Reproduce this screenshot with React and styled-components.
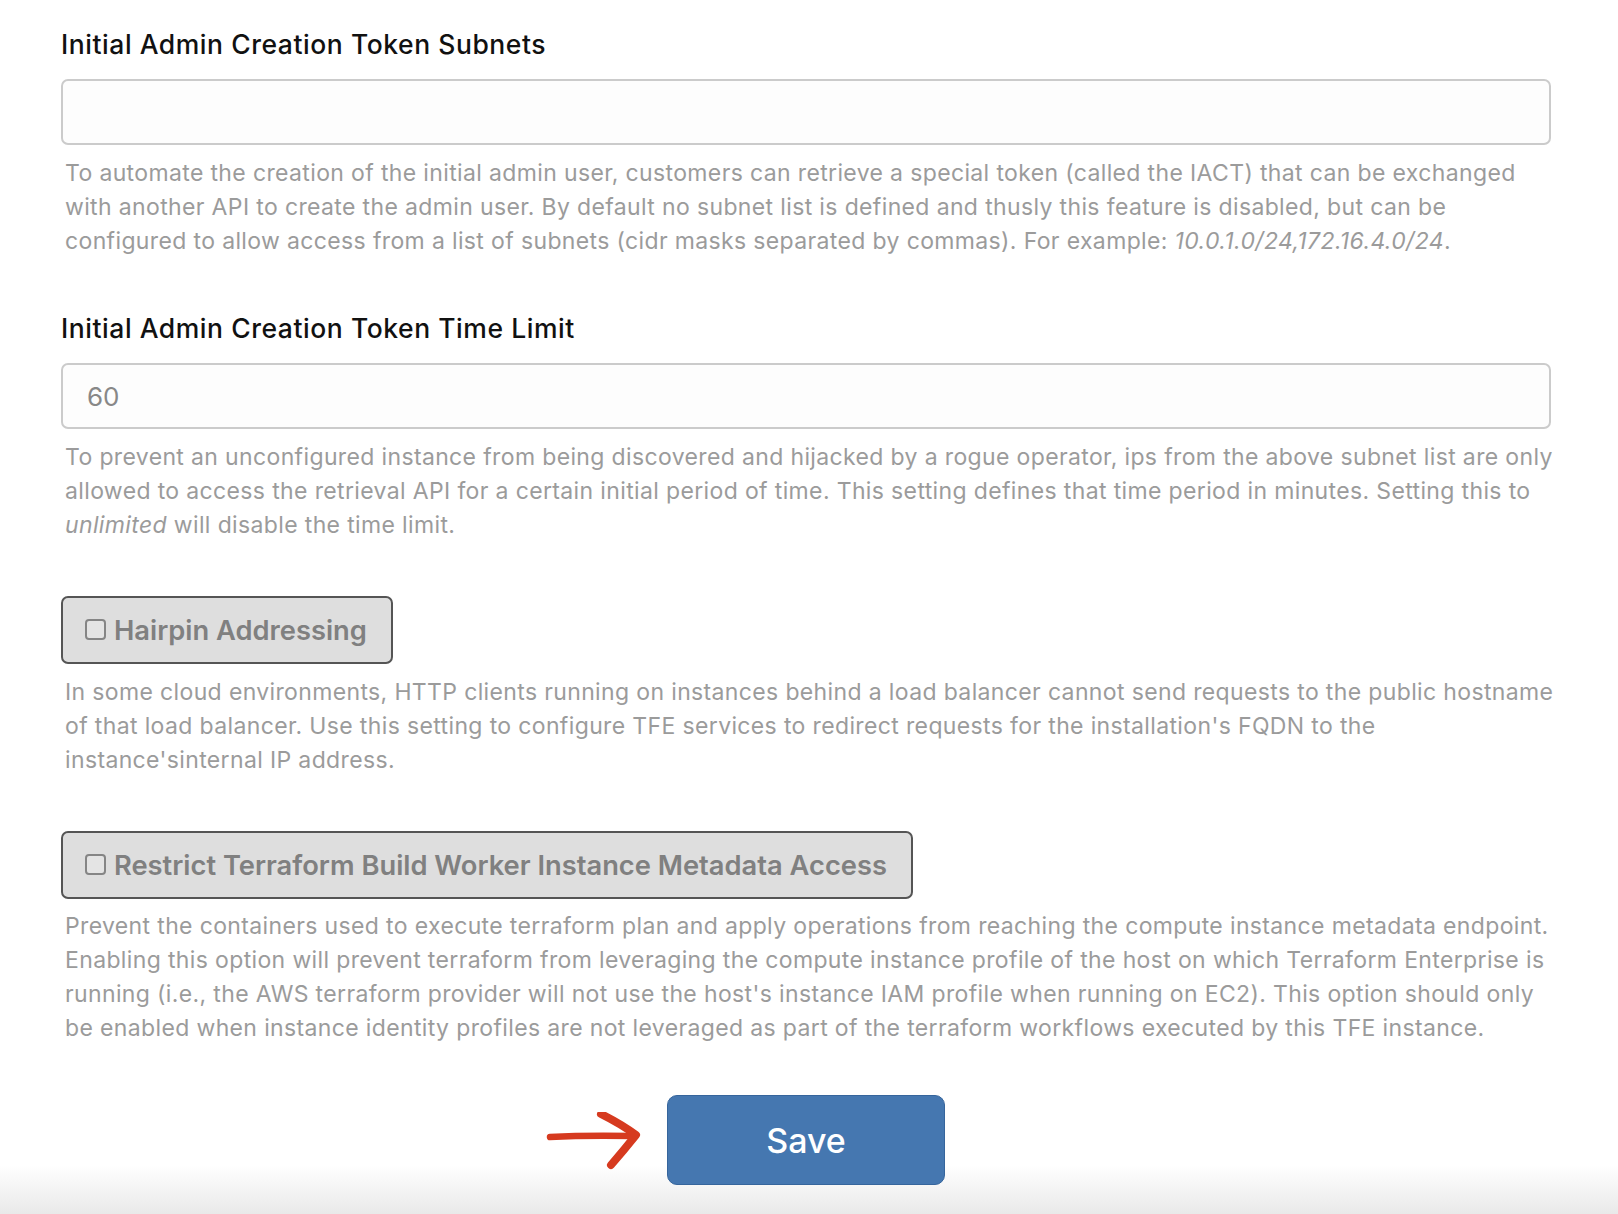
import React from "react";
import styled, { createGlobalStyle } from "styled-components";

const GlobalStyle = createGlobalStyle`
  html, body { margin: 0; padding: 0; }
  body {
    font-family: Inter, "Noto Sans", "Liberation Sans", sans-serif;
    background: #fff;
  }
`;

const Page = styled.div`
  min-height: 100vh;
  box-sizing: border-box;
  padding: 27px 67px 29px 61px;
  background: linear-gradient(to bottom, #ffffff 0, #ffffff 1165px, #e9e9e9 1214px);
`;

const Section = styled.section`
  display: flex;
  flex-direction: column;
  margin-bottom: ${(p) => p.$gap || 52}px;
`;

const Label = styled.label`
  font-size: 26.5px;
  font-weight: 500;
  color: #111;
  line-height: 34px;
  margin-bottom: 18px;
  letter-spacing: 0.55px;
`;

const TextInput = styled.input`
  box-sizing: border-box;
  height: 66px;
  width: 100%;
  border: 2px solid #cbcbcb;
  border-radius: 7px;
  background: #fdfdfd;
  padding: 0 24px;
  font-family: inherit;
  font-size: 26px;
  color: #888;
  outline: none;
  &::placeholder { color: #888; }
`;

const Help = styled.p`
  margin: ${(p) => p.$top || 11}px 0 0 4px;
  font-size: 23px;
  line-height: 34px;
  letter-spacing: 0.36px;
  color: #9b9b9b;
  white-space: nowrap;
  em { font-style: italic; }
`;

const CheckBoxButton = styled.label`
  align-self: flex-start;
  box-sizing: border-box;
  height: 68px;
  display: flex;
  align-items: center;
  gap: 8px;
  padding: 0 24px 0 22px;
  background: #dedede;
  border: 2px solid #555;
  border-radius: 7px;
  font-size: 27.3px;
  font-weight: 600;
  color: #808080;
  cursor: pointer;
`;

const Box = styled.span`
  width: 17px;
  height: 17px;
  border: 2px solid #858585;
  border-radius: 4px;
  background: #e4e4e4;
  flex: none;
  margin-top: -2px;
`;

const Actions = styled.div`
  display: flex;
  justify-content: center;
`;

const SaveWrap = styled.div`
  position: relative;
`;

const SaveButton = styled.button`
  width: 278px;
  height: 90px;
  background: #4577b0;
  border: 1px solid #36659c;
  border-radius: 10px;
  color: #fff;
  font-family: inherit;
  font-size: 34px;
  font-weight: 500;
  cursor: pointer;
`;

const Arrow = styled.svg`
  position: absolute;
  left: -121px;
  top: 17px;
  width: 100px;
  height: 60px;
`;

function CheckField({ label }) {
  return (
    <CheckBoxButton>
      <Box />
      {label}
    </CheckBoxButton>
  );
}

export default function App() {
  return (
    <>
      <GlobalStyle />
      <Page>
        <Section $gap={53}>
          <Label>Initial Admin Creation Token Subnets</Label>
          <TextInput />
          <Help>
            To automate the creation of the initial admin user, customers can retrieve a special token (called the IACT) that can be exchanged
            <br />
            with another API to create the admin user. By default no subnet list is defined and thusly this feature is disabled, but can be
            <br />
            configured to allow access from a list of subnets (cidr masks separated by commas). For example: <em>10.0.1.0/24,172.16.4.0/24</em>.
          </Help>
        </Section>
        <Section $gap={54}>
          <Label>Initial Admin Creation Token Time Limit</Label>
          <TextInput defaultValue="60" />
          <Help>
            To prevent an unconfigured instance from being discovered and hijacked by a rogue operator, ips from the above subnet list are only
            <br />
            allowed to access the retrieval API for a certain initial period of time. This setting defines that time period in minutes. Setting this to
            <br />
            <em>unlimited</em> will disable the time limit.
          </Help>
        </Section>
        <Section $gap={54}>
          <CheckField label="Hairpin Addressing" />
          <Help $top={11}>
            In some cloud environments, HTTP clients running on instances behind a load balancer cannot send requests to the public hostname
            <br />
            of that load balancer. Use this setting to configure TFE services to redirect requests for the installation's FQDN to the
            <br />
            instance'sinternal IP address.
          </Help>
        </Section>
        <Section $gap={50}>
          <CheckField label="Restrict Terraform Build Worker Instance Metadata Access" />
          <Help $top={10}>
            Prevent the containers used to execute terraform plan and apply operations from reaching the compute instance metadata endpoint.
            <br />
            Enabling this option will prevent terraform from leveraging the compute instance profile of the host on which Terraform Enterprise is
            <br />
            running (i.e., the AWS terraform provider will not use the host's instance IAM profile when running on EC2). This option should only
            <br />
            be enabled when instance identity profiles are not leveraged as part of the terraform workflows executed by this TFE instance.
          </Help>
        </Section>
        <Actions>
          <SaveWrap>
            <Arrow viewBox="0 0 100 60">
              <path
                d="M4 25 Q40 23 88 24"
                fill="none"
                stroke="#d63a1f"
                strokeWidth="6.5"
                strokeLinecap="round"
              />
              <path
                d="M55 2 Q75 12 90 23 Q78 38 65 53"
                fill="none"
                stroke="#d63a1f"
                strokeWidth="8"
                strokeLinecap="round"
                strokeLinejoin="round"
              />
            </Arrow>
            <SaveButton>Save</SaveButton>
          </SaveWrap>
        </Actions>
      </Page>
    </>
  );
}
